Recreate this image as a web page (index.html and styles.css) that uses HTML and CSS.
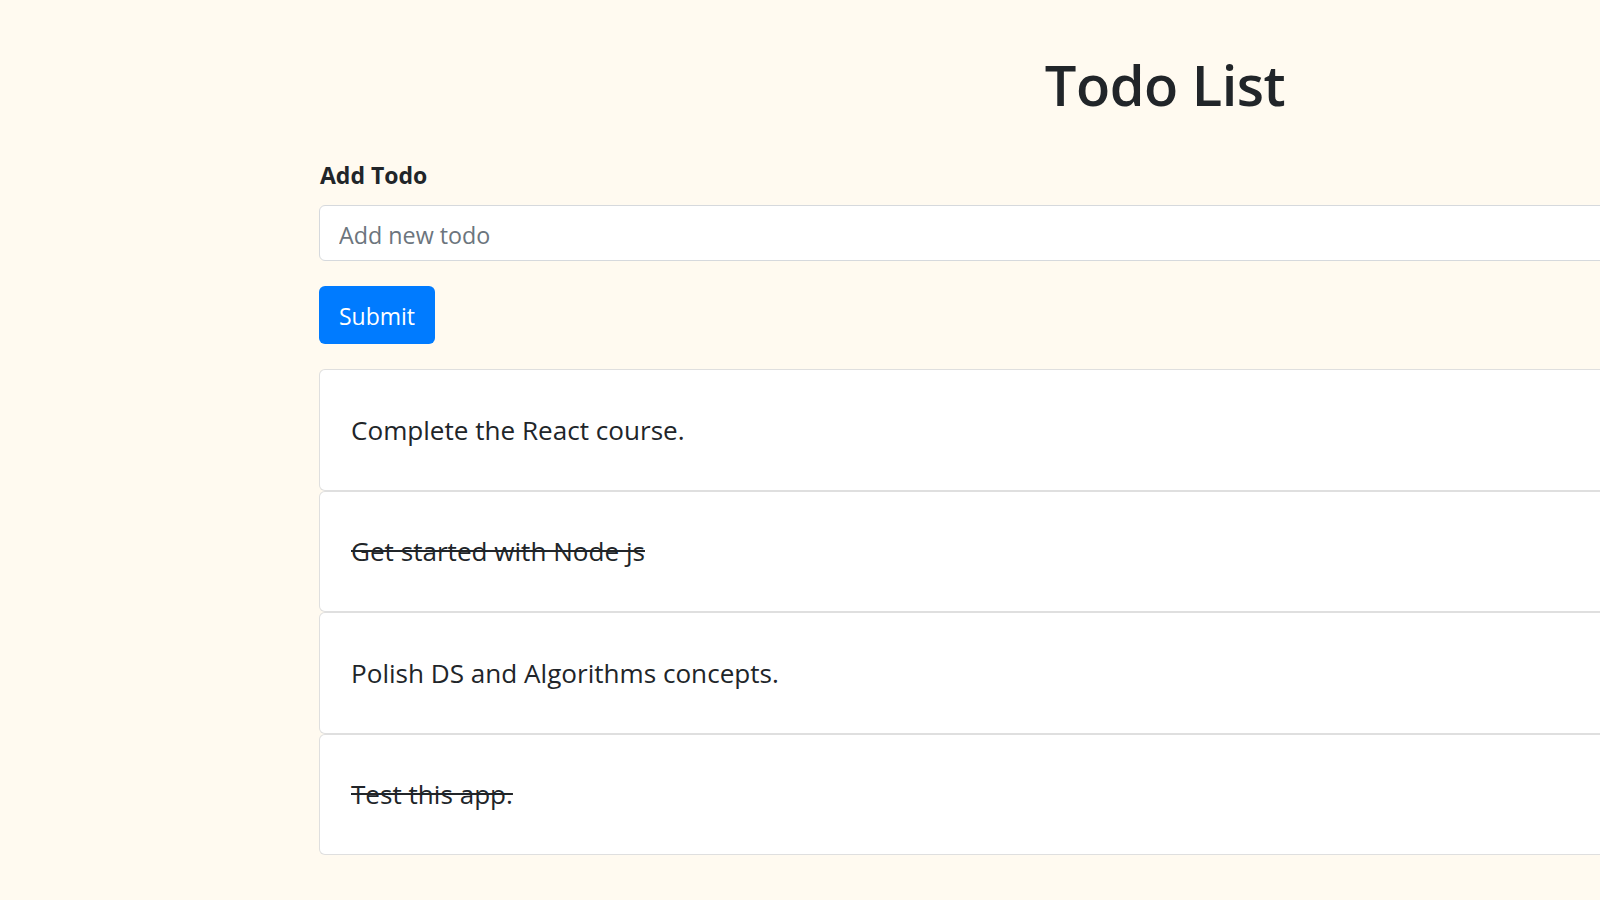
FILE: index.html
```html
<!DOCTYPE html>
<html lang="en">
<head>
<meta charset="utf-8">
<title>Todo List</title>
<link rel="stylesheet" href="styles.css">
</head>
<body>
<div class="container">
  <h1 class="title">Todo List</h1>
  <form class="todo-form">
    <label class="form-label" for="todo">Add Todo</label>
    <input class="form-input" id="todo" type="text" placeholder="Add new todo">
    <button class="btn-submit" type="button">Submit</button>
  </form>
  <div class="todo-list">
    <div class="todo-card"><span class="todo-text">Complete the React course.</span></div>
    <div class="todo-card"><span class="todo-text done">Get started with Node js</span></div>
    <div class="todo-card"><span class="todo-text">Polish DS and Algorithms concepts.</span></div>
    <div class="todo-card"><span class="todo-text done">Test this app.</span></div>
  </div>
</div>
</body>
</html>
```
FILE: styles.css
```css
html, body {
  margin: 0;
  padding: 0;
  overflow: hidden;
}
body {
  background: #fffaf0;
  color: #212529;
  font-family: "Open Sans", "Noto Sans", sans-serif;
  width: 1600px;
  height: 900px;
}
.container {
  margin-left: 319px;
  width: 1692px;
  padding-top: 48px;
}
.title {
  margin: 0 0 37px 0;
  font-size: 56px;
  line-height: 72px;
  font-weight: 600;
  letter-spacing: -0.5px;
  text-align: center;
}
.todo-form {
  display: flex;
  flex-direction: column;
  align-items: flex-start;
}
.form-label {
  display: block;
  font-size: 23px;
  line-height: 36px;
  font-weight: 700;
  margin-bottom: 12px;
  padding-left: 1px;
}
.form-input {
  box-sizing: border-box;
  width: 100%;
  height: 56px;
  border: 1.5px solid #d6d9dd;
  border-radius: 6px;
  background: #fff;
  padding: 3px 19px 0 19px;
  font-family: inherit;
  font-size: 23.3px;
  color: #495057;
  outline: none;
}
.form-input::placeholder {
  color: #6c757d;
}
.btn-submit {
  margin-top: 25px;
  box-sizing: border-box;
  height: 58px;
  width: 116px;
  padding: 2px 0 0 0;
  border: none;
  border-radius: 6px;
  background: #007bff;
  color: #fff;
  font-family: inherit;
  font-size: 23px;
}
.todo-list {
  margin-top: 25px;
  display: flex;
  flex-direction: column;
}
.todo-card {
  box-sizing: border-box;
  height: 121.5px;
  display: flex;
  align-items: center;
  padding-left: 31px;
  background: #fff;
  border: 1px solid rgba(0, 0, 0, 0.125);
  border-radius: 6px;
}
.todo-text {
  font-size: 26.1px;
  line-height: 40px;
}
.todo-text.done {
  text-decoration: line-through;
}
```
